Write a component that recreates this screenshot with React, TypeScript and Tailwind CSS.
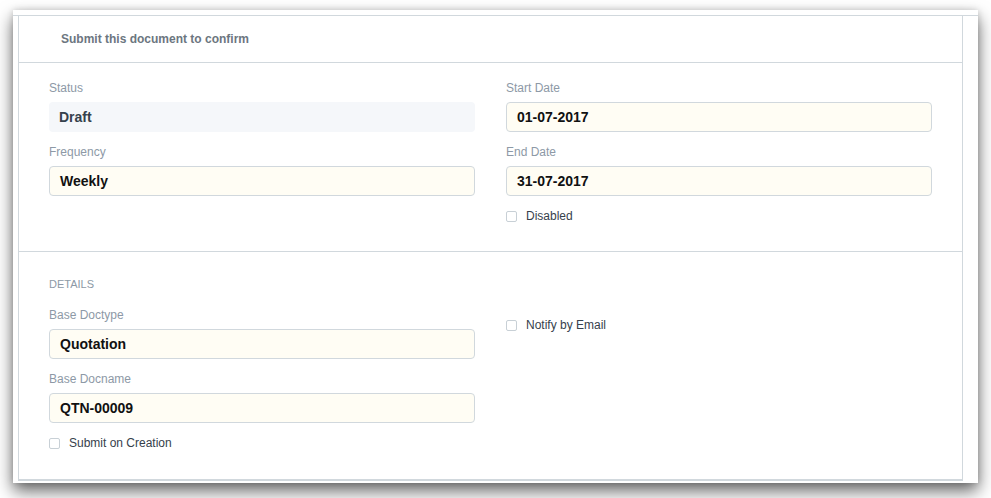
export default function App() {
  const font = { fontFamily: '"Liberation Sans", Arial, sans-serif' };

  const Label = ({ children }: { children: string }) => (
    <div className="h-[18px] leading-[18px] text-[12px] text-[#8d99a6]">{children}</div>
  );

  const Field = ({
    label,
    value,
    readOnly,
    className = "",
  }: {
    label: string;
    value: string;
    readOnly?: boolean;
    className?: string;
  }) => (
    <div className={className}>
      <Label>{label}</Label>
      {readOnly ? (
        <div className="mt-[5px] h-[30px] rounded-[4px] bg-[#f5f7fa] px-[10px] text-[14px] font-bold leading-[30px] text-[#36414c]">
          {value}
        </div>
      ) : (
        <div className="mt-[5px] h-[30px] rounded-[4px] border border-[#d1d8dd] bg-[#fffdf4] px-[10px] text-[14px] font-bold leading-[28px] text-[#111]">
          {value}
        </div>
      )}
    </div>
  );

  const Check = ({ label, className = "" }: { label: string; className?: string }) => (
    <div className={"flex h-[18px] items-center " + className}>
      <span className="h-[11px] w-[11px] rounded-[2px] border border-[#c8d0d6] bg-white" />
      <span className="ml-[9px] text-[12px] text-[#36414c]">{label}</span>
    </div>
  );

  return (
    <div className="h-[498px] w-[991px] bg-white" style={font}>
      <div className="pl-[13px] pt-[10px]">
        <div className="h-[473px] w-[965px] bg-white pt-[5px] shadow-[0_8px_16px_rgba(0,0,0,0.6),0_0_6px_rgba(0,0,0,0.15)]">
          <div className="border-t border-[#d1d8dd]">
            <div className="ml-[5px] mr-[15px] border-x border-b-2 border-[#d1d8dd]">
              {/* header */}
              <div className="flex h-[47px] items-center border-b border-[#d1d8dd] pl-[42px] text-[12px] font-bold text-[#6c7680]">
                Submit this document to confirm
              </div>

              {/* first section */}
              <div className="grid grid-cols-2 gap-x-[31px] border-b border-[#d1d8dd] px-[30px] pb-[26px] pt-[16px]">
                <div>
                  <Field label="Status" value="Draft" readOnly />
                  <Field label="Frequency" value="Weekly" className="mt-[11px]" />
                </div>
                <div>
                  <Field label="Start Date" value="01-07-2017" />
                  <Field label="End Date" value="31-07-2017" className="mt-[11px]" />
                  <Check label="Disabled" className="mt-[11px]" />
                </div>
              </div>

              {/* details */}
              <div className="px-[30px] pb-[27px] pt-[24px]">
                <div className="h-[16px] text-[11px] uppercase leading-[16px] text-[#8d99a6]">Details</div>
                <div className="mt-[14px] grid grid-cols-2 gap-x-[31px]">
                  <div>
                    <Field label="Base Doctype" value="Quotation" />
                    <Field label="Base Docname" value="QTN-00009" className="mt-[11px]" />
                    <Check label="Submit on Creation" className="mt-[11px]" />
                  </div>
                  <div>
                    <Check label="Notify by Email" className="mt-[10px]" />
                  </div>
                </div>
              </div>
            </div>
          </div>
        </div>
      </div>
    </div>
  );
}
